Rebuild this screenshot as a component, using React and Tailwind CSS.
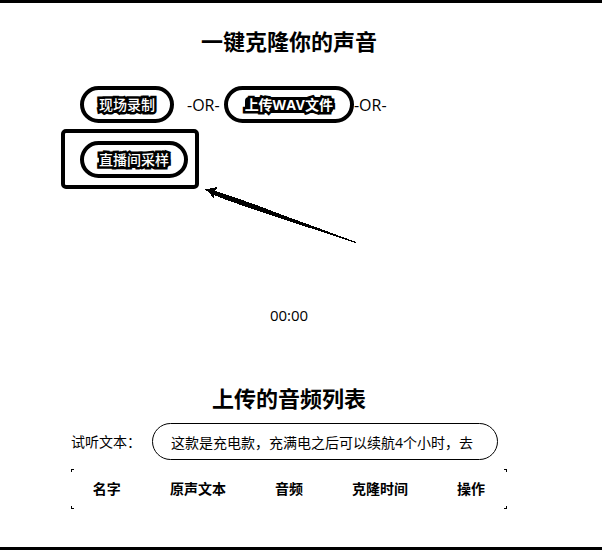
import React from "react";

const columns = ["名字", "原声文本", "音频", "克隆时间", "操作"];

function PillButton({ children, variant = "px-[15px] font-medium" }) {
  return (
    <button
      type="button"
      className={`${variant} flex h-[37px] items-center whitespace-nowrap rounded-full border-4 border-black bg-white text-sm text-white`}
    >
      <span className="block rounded-sm bg-black leading-4 [-webkit-text-stroke:5px_#000] [paint-order:stroke_fill]">
        {children}
      </span>
    </button>
  );
}

function Arrow() {
  return (
    <svg
      className="pointer-events-none absolute left-full top-full ml-[10px] mt-[2px]"
      width="154"
      height="57"
      viewBox="0 0 154 57"
      shapeRendering="crispEdges"
      aria-hidden="true"
    >
      <path
        d="M0 2.5 L12 0 L12 1 L10 4 L23 8 L50 17.5 L83 30 L116 42 L151 55 V56 L116 44.5 L83 34 L50 23 L23 13.5 L9 8 L9 11 L8 11 L5 6 Z"
        fill="#000"
      />
    </svg>
  );
}

function Corners() {
  return (
    <>
      <span className="absolute left-0 top-0 size-[3px] border-l border-t border-black" />
      <span className="absolute right-0 top-0 size-[3px] border-r border-t border-black" />
      <span className="absolute bottom-0 left-0 size-[3px] border-b border-l border-black" />
      <span className="absolute bottom-0 right-0 size-[3px] border-b border-r border-black" />
    </>
  );
}

export default function App() {
  return (
    <main className="min-h-screen border-y-[3px] border-black bg-white pl-[71px] pr-[95px] pt-[22px] text-sm text-black [font-family:'Open_Sans','Noto_Sans_CJK_SC',sans-serif]">
      <h1 className="text-center text-[22px] font-bold leading-8">一键克隆你的声音</h1>

      <section className="mt-[29px] pl-[9px]">
        <div className="flex items-center">
          <PillButton>现场录制</PillButton>
          <span className="ml-[13px] mr-1 text-base leading-5">-OR-</span>
          <PillButton variant="px-[17px] font-bold">上传WAV文件</PillButton>
          <span className="text-base leading-5">-OR-</span>
        </div>
        <div className="mt-[18px] flex">
          <div className="relative flex">
            <PillButton>直播间采样</PillButton>
            <div className="pointer-events-none absolute -bottom-[11px] -left-[19px] -right-[11px] -top-[12px] rounded-[5px] border-4 border-black">
              <Arrow />
            </div>
          </div>
        </div>
      </section>

      <div className="mt-[127px] text-center text-[15px] leading-5">00:00</div>

      <section className="mt-[57px]">
        <h2 className="text-center text-[22px] font-bold leading-8">上传的音频列表</h2>
        <div className="mt-[9px] flex items-center pr-[9px]">
          <label htmlFor="preview-text" className="w-[81px] shrink-0 whitespace-nowrap leading-5">
            试听文本：
          </label>
          <input
            id="preview-text"
            type="text"
            defaultValue="这款是充电款，充满电之后可以续航4个小时，去"
            className="h-[37px] w-full min-w-0 rounded-full border border-black bg-white pl-[18px] pr-4 outline-none"
          />
        </div>
        <div className="relative mt-[9px]">
          <table className="w-full">
            <thead>
              <tr>
                {columns.map((name) => (
                  <th key={name} scope="col" className="h-10 whitespace-nowrap px-3 font-bold">
                    {name}
                  </th>
                ))}
              </tr>
            </thead>
          </table>
          <Corners />
        </div>
      </section>
    </main>
  );
}
